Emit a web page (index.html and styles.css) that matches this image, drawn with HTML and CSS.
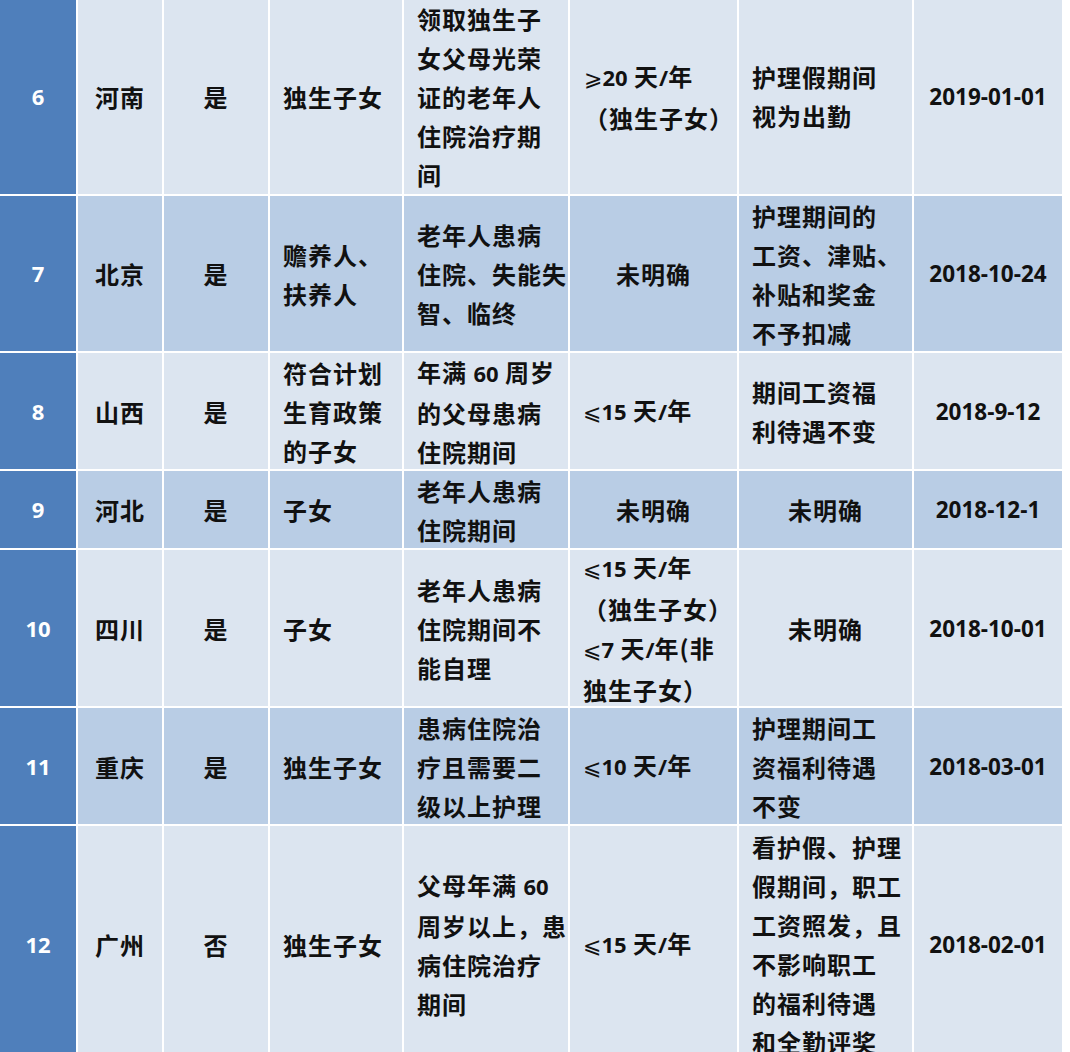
FILE: index.html
```html
<!DOCTYPE html>
<html lang="zh-CN">
<head>
<meta charset="utf-8">
<title>子女护理假政策</title>
<link rel="stylesheet" href="styles.css">
</head>
<body>
<div class="sheet">
  <div class="row light">
    <div class="cell no">6</div>
    <div class="cell c">河南</div>
    <div class="cell c">是</div>
    <div class="cell l">独生子女</div>
    <div class="cell l"><span>领取独生子<br>女父母光荣<br>证的老年人<br>住院治疗期<br>间</span></div>
    <div class="cell l6"><span><span class="sym">⩾</span><b class="n">20</b> 天<b class="n">/</b>年<br>（独生子女）</span></div>
    <div class="cell l"><span>护理假期间<br>视为出勤</span></div>
    <div class="cell c date">2019-01-01</div>
  </div>
  <div class="row dark">
    <div class="cell no">7</div>
    <div class="cell c">北京</div>
    <div class="cell c">是</div>
    <div class="cell l"><span>赡养人、<br>扶养人</span></div>
    <div class="cell l"><span>老年人患病<br>住院、失能失<br>智、临终</span></div>
    <div class="cell c">未明确</div>
    <div class="cell l"><span>护理期间的<br>工资、津贴、<br>补贴和奖金<br>不予扣减</span></div>
    <div class="cell c date">2018-10-24</div>
  </div>
  <div class="row light">
    <div class="cell no">8</div>
    <div class="cell c">山西</div>
    <div class="cell c">是</div>
    <div class="cell l"><span>符合计划<br>生育政策<br>的子女</span></div>
    <div class="cell l"><span>年满 <b class="n">60</b> 周岁<br>的父母患病<br>住院期间</span></div>
    <div class="cell l"><span><span class="sym">⩽</span><b class="n">15</b> 天<b class="n">/</b>年</span></div>
    <div class="cell l"><span>期间工资福<br>利待遇不变</span></div>
    <div class="cell c date">2018-9-12</div>
  </div>
  <div class="row dark">
    <div class="cell no">9</div>
    <div class="cell c">河北</div>
    <div class="cell c">是</div>
    <div class="cell l">子女</div>
    <div class="cell l"><span>老年人患病<br>住院期间</span></div>
    <div class="cell c">未明确</div>
    <div class="cell c">未明确</div>
    <div class="cell c date">2018-12-1</div>
  </div>
  <div class="row light">
    <div class="cell no">10</div>
    <div class="cell c">四川</div>
    <div class="cell c">是</div>
    <div class="cell l">子女</div>
    <div class="cell l"><span>老年人患病<br>住院期间不<br>能自理</span></div>
    <div class="cell l"><span><span class="sym">⩽</span><b class="n">15</b> 天<b class="n">/</b>年<br>（独生子女）<br><span class="sym">⩽</span><b class="n">7</b> 天<b class="n">/</b>年(非<br>独生子女）</span></div>
    <div class="cell c">未明确</div>
    <div class="cell c date">2018-10-01</div>
  </div>
  <div class="row dark">
    <div class="cell no">11</div>
    <div class="cell c">重庆</div>
    <div class="cell c">是</div>
    <div class="cell l">独生子女</div>
    <div class="cell l"><span>患病住院治<br>疗且需要二<br>级以上护理</span></div>
    <div class="cell l"><span><span class="sym">⩽</span><b class="n">10</b> 天<b class="n">/</b>年</span></div>
    <div class="cell l"><span>护理期间工<br>资福利待遇<br>不变</span></div>
    <div class="cell c date">2018-03-01</div>
  </div>
  <div class="row light">
    <div class="cell no">12</div>
    <div class="cell c">广州</div>
    <div class="cell c">否</div>
    <div class="cell l">独生子女</div>
    <div class="cell l"><span>父母年满 <b class="n">60</b><br>周岁以上，患<br>病住院治疗<br>期间</span></div>
    <div class="cell l"><span><span class="sym">⩽</span><b class="n">15</b> 天<b class="n">/</b>年</span></div>
    <div class="cell l"><span>看护假、护理<br>假期间，职工<br>工资照发，且<br>不影响职工<br>的福利待遇<br>和全勤评奖</span></div>
    <div class="cell c date">2018-02-01</div>
  </div>
</div>
</body>
</html>
```
FILE: styles.css
```css
html, body {
  margin: 0;
  padding: 0;
  background: #ffffff;
}
body {
  width: 1070px;
  height: 1052px;
  overflow: hidden;
  font-family: "Noto Sans CJK SC", "Noto Sans", sans-serif;
  font-size: 24px;
  color: #111111;
}
.sheet {
  display: grid;
  width: 1062px;
  margin-top: -2px;
  grid-template-columns: 76px 84px 104px 132px 164px 167px 173px 148px;
  grid-template-rows: 196px 155px 116px 77px 156px 116px 236px;
  gap: 2px;
  background: #ffffff;
}
.row {
  display: contents;
}
.cell {
  display: flex;
  align-items: center;
  line-height: 39px;
  font-weight: 700;
  letter-spacing: 1px;
  white-space: nowrap;
  overflow: visible;
}
.light > .cell { background: #dce5f0; }
.dark > .cell { background: #b9cde5; }
.row > .cell.no {
  background: #4f7fbb;
  color: #ffffff;
  justify-content: center;
  font-family: "Open Sans", "Noto Sans", sans-serif;
  font-weight: 700;
  font-size: 22px;
  letter-spacing: 0;
}
.c {
  justify-content: center;
  text-align: center;
}
.l {
  justify-content: flex-start;
  padding-left: 13px;
}
.l6 {
  justify-content: flex-start;
  padding-left: 14px;
}
.date {
  font-family: "Open Sans", "Noto Sans", sans-serif;
  font-weight: 700;
  font-size: 22.5px;
  letter-spacing: 0;
}
.n {
  font-family: "Open Sans", "Noto Sans", sans-serif;
  font-weight: 700;
  font-size: 22px;
  letter-spacing: 0;
}
.sym {
  font-family: "DejaVu Sans", sans-serif;
  font-weight: 400;
  font-size: 22px;
  letter-spacing: 0;
}
```
